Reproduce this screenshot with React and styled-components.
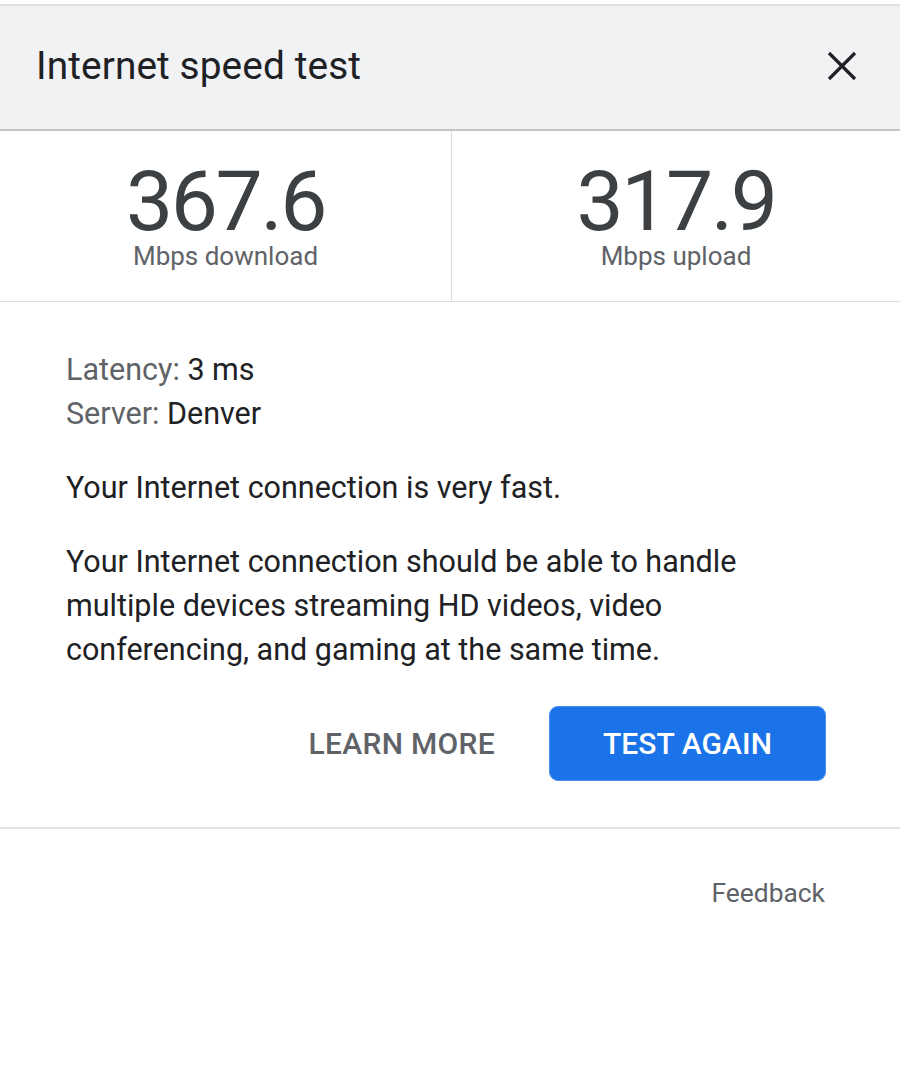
import React from "react";
import styled, { createGlobalStyle } from "styled-components";

const Global = createGlobalStyle`
  html, body { margin: 0; padding: 0; background: #fff; }
  body { font-family: Roboto, "Noto Sans", Arial, sans-serif; }
`;

const Page = styled.div`
  width: 900px;
  min-height: 1071px;
  background: #fff;
  padding-top: 4px;
  box-sizing: border-box;
`;

const Header = styled.header`
  height: 123px;
  background: #f1f2f4;
  border-top: 2px solid #dfe0e2;
  border-bottom: 2px solid #c4c5c7;
  display: flex;
  align-items: center;
  justify-content: space-between;
  padding: 0 38px 0 36px;
  box-sizing: content-box;
`;

const Title = styled.h1`
  margin: 0;
  font-size: 38.8px;
  font-weight: 400;
  color: #202124;
  letter-spacing: 0.1px;
  padding-bottom: 4px;
`;

const CloseBtn = styled.button`
  border: 0;
  background: transparent;
  padding: 0;
  width: 40px;
  height: 40px;
  display: flex;
  align-items: center;
  justify-content: center;
  margin-bottom: 4px;
`;

const Stats = styled.div`
  display: grid;
  grid-template-columns: 451px 1fr;
  height: 170px;
  border-bottom: 1px solid #dadce0;
`;

const Stat = styled.div`
  display: flex;
  flex-direction: column;
  align-items: center;
  padding-top: 33px;
  border-left: ${(p) => (p.$divided ? "1px solid #dadce0" : "none")};
`;

const Value = styled.div`
  font-size: 84px;
  line-height: 76px;
  color: #3c4043;
  font-weight: 400;
  letter-spacing: -2.4px;
`;

const Unit = styled.div`
  font-size: 26px;
  line-height: 32px;
  color: #5f6368;
`;

const Body = styled.section`
  padding: 46px 60px 0 66px;
`;

const Meta = styled.div`
  font-size: 30.5px;
  line-height: 44px;
  color: #5f6368;
`;

const MetaValue = styled.span`
  color: #202124;
`;

const Para = styled.p`
  margin: ${(p) => p.$mt || 0}px 0 0 0;
  font-size: 30.5px;
  line-height: 44px;
  color: #202124;
`;

const Actions = styled.div`
  display: flex;
  justify-content: flex-end;
  align-items: center;
  gap: 54px;
  margin: 34px -60px 0 -66px;
  padding: 0 74px 46px 0;
  border-bottom: 2px solid #e3e3e3;
`;

const TextButton = styled.button`
  border: 0;
  background: transparent;
  font-family: inherit;
  font-size: 30px;
  font-weight: 500;
  color: #5f6368;
  letter-spacing: 0.3px;
  padding: 0;
`;

const PrimaryButton = styled.button`
  border: 1px solid #4a8ef0;
  background: #1a73e8;
  color: #fff;
  font-family: inherit;
  font-size: 30px;
  font-weight: 500;
  letter-spacing: 0.1px;
  width: 277px;
  height: 75px;
  border-radius: 9px;
`;

const Footer = styled.div`
  display: flex;
  justify-content: flex-end;
  padding: 49px 75px 0 0;
`;

const FeedbackLink = styled.a`
  font-size: 26.4px;
  color: #5f6368;
  text-decoration: none;
`;

export default function App() {
  return (
    <Page>
      <Global />
      <Header>
        <Title>Internet speed test</Title>
        <CloseBtn aria-label="Close">
          <svg width="32" height="32" viewBox="0 0 32 32">
            <path d="M3 3 L29 29 M29 3 L3 29" stroke="#202124" strokeWidth="3.2" fill="none" />
          </svg>
        </CloseBtn>
      </Header>
      <Stats>
        <Stat>
          <Value>367.6</Value>
          <Unit>Mbps download</Unit>
        </Stat>
        <Stat $divided>
          <Value>317.9</Value>
          <Unit>Mbps upload</Unit>
        </Stat>
      </Stats>
      <Body>
        <Meta>
          Latency: <MetaValue>3 ms</MetaValue>
        </Meta>
        <Meta>
          Server: <MetaValue>Denver</MetaValue>
        </Meta>
        <Para $mt={30}>Your Internet connection is very fast.</Para>
        <Para $mt={30}>
          Your Internet connection should be able to handle multiple devices streaming HD videos, video
          conferencing, and gaming at the same time.
        </Para>
        <Actions>
          <TextButton>LEARN MORE</TextButton>
          <PrimaryButton>TEST AGAIN</PrimaryButton>
        </Actions>
      </Body>
      <Footer>
        <FeedbackLink href="#">Feedback</FeedbackLink>
      </Footer>
    </Page>
  );
}
